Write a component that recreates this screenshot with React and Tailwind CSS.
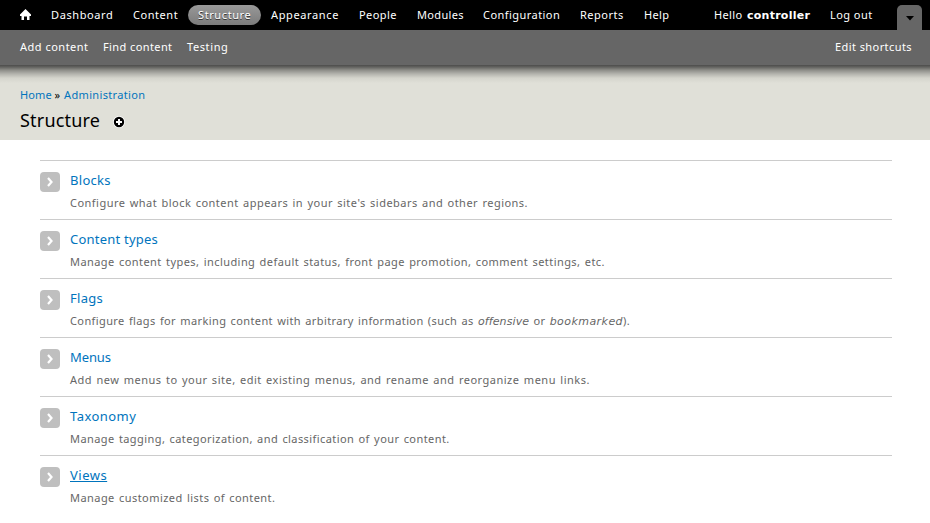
const navItems = [
  { label: 'Dashboard', cls: 'w-[82px] tracking-[0.6px]' },
  { label: 'Content', cls: 'w-[65px] tracking-[0.55px]' },
  { label: 'Structure', cls: 'w-[73px] tracking-[0.6px]', active: true },
  { label: 'Appearance', cls: 'w-[88px] tracking-[0.63px]' },
  { label: 'People', cls: 'w-[58px] tracking-[0.45px]' },
  { label: 'Modules', cls: 'w-[66px] tracking-[0.35px]' },
  { label: 'Configuration', cls: 'w-[97px] tracking-[0.45px]' },
  { label: 'Reports', cls: 'w-[64px] tracking-[0.5px]' },
  { label: 'Help', cls: 'w-[80px] tracking-[0.35px]' },
];

const obliqueCls = "font-['DejaVu_Sans',sans-serif]";

const sections = [
  { title: 'Blocks', titleCls: 'tracking-[0.3px]', text: "Configure what block content appears in your site's sidebars and other regions.", cls: 'tracking-[0.475px]' },
  { title: 'Content types', titleCls: 'tracking-[0.22px]', text: 'Manage content types, including default status, front page promotion, comment settings, etc.', cls: 'tracking-[0.435px]' },
  { title: 'Flags', titleCls: 'tracking-[0.3px]', text: <>Configure flags for marking content with arbitrary information (such as <em className={`${obliqueCls} tracking-[0.1px]`}>offensive</em> or <em className={`${obliqueCls} tracking-[0.45px]`}>bookmarked</em>).</>, cls: 'tracking-[0.39px]' },
  { title: 'Menus', titleCls: 'tracking-[-0.1px]', text: 'Add new menus to your site, edit existing menus, and rename and reorganize menu links.', cls: 'tracking-[0.5px]' },
  { title: 'Taxonomy', titleCls: 'tracking-[0.45px]', text: 'Manage tagging, categorization, and classification of your content.', cls: 'tracking-[0.42px]' },
  { title: 'Views', titleCls: 'tracking-[0.5px] underline underline-offset-[1px] decoration-1 [text-decoration-skip-ink:none]', text: 'Manage customized lists of content.', cls: 'tracking-[0.44px]' },
];

function Toolbar() {
  return (
    <nav className="flex h-[30px] bg-black pt-[5px] pl-[20px] text-white">
      <a className="mt-[4px] mr-[10px] h-[12px] w-[11px]">
        <svg width="11" height="11" viewBox="0 0 11 11" fill="#fff">
          <path d="M5.5 0 L11 5.5 V7 H9.5 V11 H7 V7.5 H4 V11 H1.5 V7 H0 V5.5 Z" />
        </svg>
      </a>
      {navItems.map((item) => (
        <a
          key={item.label}
          className={`h-[20px] pl-[10px] ${item.cls} ${item.active ? 'rounded-full bg-linear-to-b from-[#999] to-[#7b7b7b] [text-shadow:0_1px_0_#333]' : ''}`}
        >
          {item.label}
        </a>
      ))}
      <span className="w-[33px] tracking-[0.35px]">Hello</span>
      <b className="w-[83px] pt-px font-['DejaVu_Sans',sans-serif] tracking-[0.25px]">controller</b>
      <a className="w-[67px] tracking-[0.45px]">Log out</a>
      <span className="flex h-[25px] w-[25px] justify-center rounded-t-[5px] bg-[#666] pt-[11px]">
        <svg width="8" height="5" viewBox="0 0 8 5"><path d="M0 0H8L4 4.5Z" /></svg>
      </span>
    </nav>
  );
}

function Shortcuts() {
  return (
    <div className="flex h-[35px] bg-[#666] pt-[7px] pl-[20px] text-white">
      <a className="w-[83px] tracking-[0.5px]">Add content</a>
      <a className="w-[84px] tracking-[0.4px]">Find content</a>
      <a className="w-[648px] tracking-[0.6px]">Testing</a>
      <a className="tracking-[0.42px]">Edit shortcuts</a>
    </div>
  );
}

export default function App() {
  return (
    <div className="h-[523px] w-[930px] overflow-hidden bg-white font-['Noto_Sans',sans-serif] text-[11px] leading-[20px] whitespace-nowrap">
      <Toolbar />
      <Shortcuts />
      <header className="h-[75px] bg-[#e0e0d8]">
        <div className="h-[20px] bg-[linear-gradient(to_bottom,#4c4c4b_0px,#62625f_2px,#8c8c87_5px,#b4b4ae_9px,#d4d4cc_13px,#e0e0d8_18px)]" />
        <div className="flex pl-[20px] text-[#0074bd]">
          <a className="w-[34px] tracking-[0.1px]">Home</a>
          <span className="w-[10px] pl-[0.5px] text-black">»</span>
          <a className="tracking-[0.35px]">Administration</a>
        </div>
        <div className="flex pl-[20px]">
          <h1 className="w-[93px] pt-[5px] text-[18px] tracking-[0.2px]">Structure</h1>
          <svg className="mt-[11px]" width="12" height="12" viewBox="0 0 12 12">
            <circle cx="6" cy="6" r="6" fill="#fff" />
            <circle cx="6" cy="6" r="5.2" />
            <path d="M3 6H9M6 3V9" stroke="#fff" strokeWidth="2" />
          </svg>
        </div>
      </header>
      <main className="pt-[20px] pr-[38px] pl-[40px]">
        {sections.map((section) => (
          <section key={section.title} className="flex h-[59px] border-t border-[#ccc] pt-[9px]">
            <span className="mt-[2px] mr-[10px] h-[20px] w-[20px] rounded-[4px] bg-[#bfbfbf]">
              <svg width="20" height="20" viewBox="0 0 20 20" fill="none" stroke="#fff" strokeWidth="2.2">
                <path d="M8 6L11.5 10L8 14" />
              </svg>
            </span>
            <div>
              <a className={`block h-[23px] text-[13px] text-[#0074bd] ${section.titleCls}`}>{section.title}</a>
              <p className={`text-[#666] [word-spacing:1px] ${section.cls}`}>{section.text}</p>
            </div>
          </section>
        ))}
      </main>
    </div>
  );
}
